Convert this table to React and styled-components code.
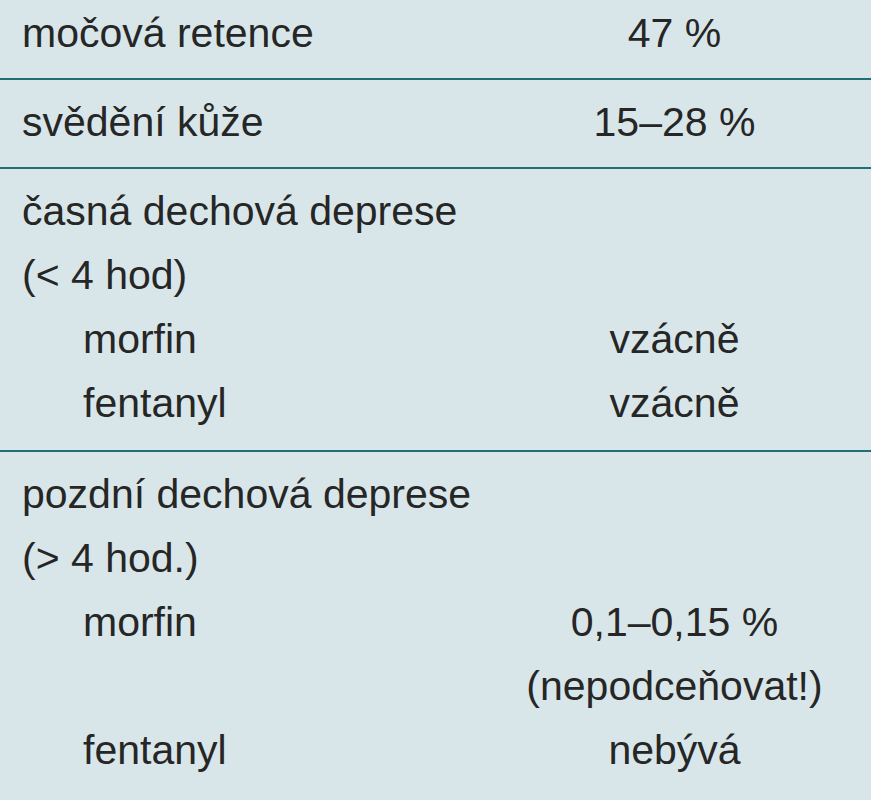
import React from "react";
import styled, { createGlobalStyle } from "styled-components";

const GlobalStyle = createGlobalStyle`
  html, body {
    margin: 0;
    padding: 0;
    background: #d9e6e9;
  }
`;

const Table = styled.div`
  width: 871px;
  height: 800px;
  overflow: hidden;
  background: #d9e6e9;
  color: #262626;
  font-family: "Liberation Sans", Arial, sans-serif;
  font-size: 41px;
`;

const Section = styled.div`
  padding: ${props => props.$top || 10}px 0 ${props => props.$bottom || 13}px;
  border-bottom: ${props => (props.$last ? "none" : "2px solid #236e75")};
`;

const Line = styled.div`
  display: grid;
  grid-template-columns: 478px 1fr;
  height: 64px;
  line-height: 64px;
`;

const Label = styled.div`
  padding-left: ${props => (props.$indent ? 83 : 22)}px;
  white-space: nowrap;
`;

const Value = styled.div`
  text-align: center;
  white-space: nowrap;
`;

const sections = [
  { top: 1, rows: [["močová retence", "47 %"]] },
  { rows: [["svědění kůže", "15–28 %"]] },
  {
    bottom: 15,
    rows: [
      ["časná dechová deprese", ""],
      ["(< 4 hod)", ""],
      ["morfin", "vzácně", true],
      ["fentanyl", "vzácně", true]
    ]
  },
  {
    last: true,
    rows: [
      ["pozdní dechová deprese", ""],
      ["(> 4 hod.)", ""],
      ["morfin", "0,1–0,15 %", true],
      ["", "(nepodceňovat!)", true],
      ["fentanyl", "nebývá", true]
    ]
  }
];

const App = () => {
  return (
    <>
      <GlobalStyle />
      <Table>
        {sections.map((section, i) => (
          <Section
            key={i}
            $top={section.top}
            $bottom={section.bottom}
            $last={section.last}
          >
            {section.rows.map(([label, value, indent], j) => (
              <Line key={j}>
                <Label $indent={indent}>{label}</Label>
                <Value>{value}</Value>
              </Line>
            ))}
          </Section>
        ))}
      </Table>
    </>
  );
};

export default App;
